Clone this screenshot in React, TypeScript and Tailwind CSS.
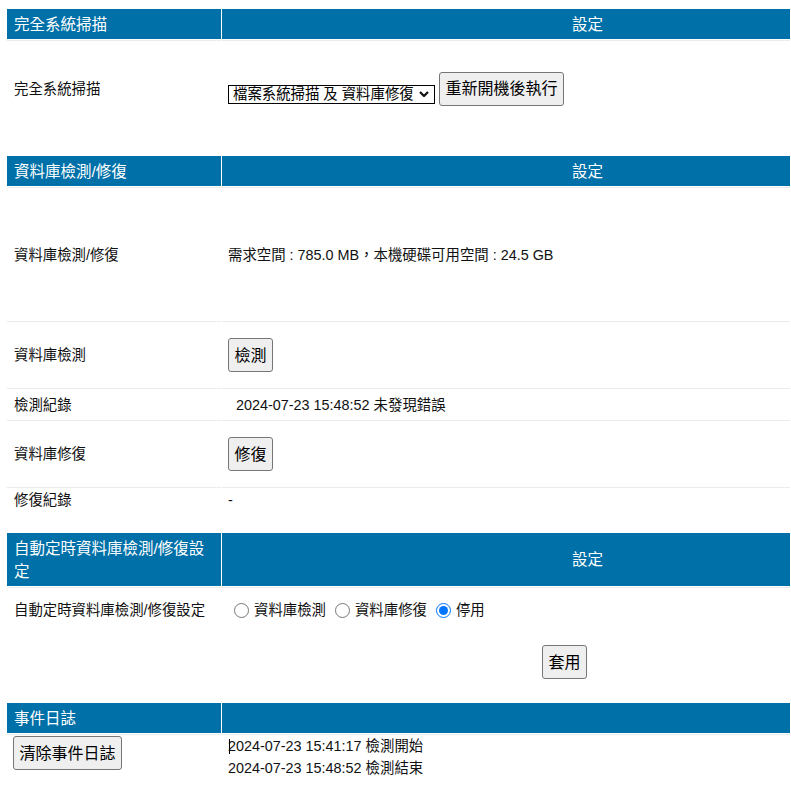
import type { ReactNode } from "react";

const font = { fontFamily: '"Liberation Sans", "Noto Sans CJK TC", sans-serif' };

function Header({ left, right, tall = false }: { left: string; right?: string; tall?: boolean }) {
  return (
    <div className="grid grid-cols-[214px_1fr] gap-x-px text-[15.5px] leading-[23px] text-white">
      <div className={`flex items-center bg-[#0070a8] px-[7px] ${tall ? "h-[53px]" : "h-[30px]"}`}>{left}</div>
      <div className={`flex items-center bg-[#0070a8] pl-[350px] ${tall ? "h-[53px]" : "h-[30px]"}`}>{right}</div>
    </div>
  );
}

function Row({ left, children, h, rightClass = "", leftClass = "items-center" }: { left: ReactNode; children?: ReactNode; h: string; rightClass?: string; leftClass?: string }) {
  return (
    <div className={`grid grid-cols-[214px_1fr] gap-x-px ${h}`}>
      <div className={`flex border-t border-[#ebebeb] px-[7px] ${leftClass}`}>{left}</div>
      <div className={`flex border-t border-[#ebebeb] pl-[6px] ${rightClass}`}>{children}</div>
    </div>
  );
}

function Btn({ children }: { children: ReactNode }) {
  return (
    <button className="rounded-[3px] border border-[#767676] bg-[#efefef] px-[5.5px] py-[5.5px] text-[16px] leading-[21px] text-black">
      {children}
    </button>
  );
}

function Radio({ label, checked = false, first = false }: { label: string; checked?: boolean; first?: boolean }) {
  return (
    <label className="flex items-center">
      <input
        type="radio"
        name="auto"
        defaultChecked={checked}
        className={`mr-[5px] h-[15px] w-[15px] ${first ? "ml-[6px]" : "ml-[9px]"}`}
      />
      {label}
    </label>
  );
}

export default function App() {
  return (
    <div style={font} className="bg-white pt-[9px] pl-[7px] text-[14.4px] leading-[20px] text-[#111]">
      <div className="w-[783px]">
        {/* 完全系統掃描 */}
        <section className="mb-[20px]">
          <Header left="完全系統掃描" right="設定" />
          <div className="mt-px" />
          <Row left="完全系統掃描" h="h-[96px]" rightClass="items-center">
            <div className="flex items-end gap-[4px]">
              <div className="relative mb-[2px]">
                <select
                  defaultValue="a"
                  className="h-[19px] w-[207px] appearance-none rounded-none border border-black bg-white pl-[4px] text-[14.4px] leading-[17px] text-black"
                >
                  <option value="a">檔案系統掃描 及 資料庫修復</option>
                </select>
                <svg className="pointer-events-none absolute right-[6px] top-[7px]" width="10" height="6" viewBox="0 0 10 6">
                  <path d="M1 1 L5 5 L9 1" fill="none" stroke="#111" strokeWidth="2.2" />
                </svg>
              </div>
              <Btn>重新開機後執行</Btn>
            </div>
          </Row>
        </section>

        {/* 資料庫檢測/修復 */}
        <section className="mb-[22px]">
          <Header left="資料庫檢測/修復" right="設定" />
          <div className="mt-px" />
          <Row left="資料庫檢測/修復" h="h-[134px]" rightClass="items-center">
            需求空間 : 785.0 MB，本機硬碟可用空間 : 24.5 GB
          </Row>
          <Row left="資料庫檢測" h="h-[67px]" rightClass="items-center">
            <Btn>檢測</Btn>
          </Row>
          <Row left="檢測紀錄" h="h-[32px]" rightClass="items-center pl-[14px]">
            2024-07-23 15:48:52 未發現錯誤
          </Row>
          <Row left="資料庫修復" h="h-[67px]" rightClass="items-center">
            <Btn>修復</Btn>
          </Row>
          <Row left="修復紀錄" h="h-[24px]" rightClass="items-center">
            -
          </Row>
        </section>

        {/* 自動定時 */}
        <section className="mb-[20px]">
          <Header left="自動定時資料庫檢測/修復設定" right="設定" tall />
          <div className="mt-px" />
          <Row left="自動定時資料庫檢測/修復設定" h="h-[96px]" leftClass="items-start pt-[12px]" rightClass="flex-col pt-[12px]">
            <div className="flex items-center">
              <Radio label="資料庫檢測" first />
              <Radio label="資料庫修復" />
              <Radio label="停用" checked />
            </div>
            <div className="mt-[25px] pl-[314px]">
              <Btn>套用</Btn>
            </div>
          </Row>
        </section>

        {/* 事件日誌 */}
        <section>
          <Header left="事件日誌" />
          <div className="mt-px" />
          <Row left={<Btn>清除事件日誌</Btn>} h="h-[60px]" leftClass="items-start pt-px pl-[6px]" rightClass="items-start">
            <div className="relative leading-[22px]">
              <span className="absolute left-px top-[4px] h-[15px] w-px bg-black" />
              <div>2024-07-23 15:41:17 檢測開始</div>
              <div>2024-07-23 15:48:52 檢測結束</div>
            </div>
          </Row>
        </section>
      </div>
    </div>
  );
}
